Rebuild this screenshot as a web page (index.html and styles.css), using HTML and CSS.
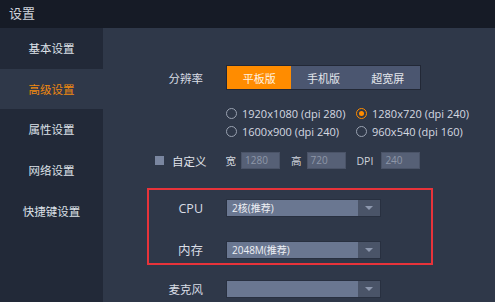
FILE: index.html
```html
<!DOCTYPE html>
<html lang="zh">
<head>
<meta charset="utf-8">
<link rel="stylesheet" href="styles.css">
</head>
<body>
<div class="app">
  <header class="titlebar">设置</header>
  <div class="body">
    <nav class="sidebar">
      <div class="nav-item">基本设置</div>
      <div class="nav-item active">高级设置</div>
      <div class="nav-item">属性设置</div>
      <div class="nav-item">网络设置</div>
      <div class="nav-item">快捷键设置</div>
    </nav>
    <main class="main">
      <div class="row res-row">
        <div class="label">分辨率</div>
        <div class="seg">
          <div class="seg-btn on">平板版</div>
          <div class="seg-btn">手机版</div>
          <div class="seg-btn">超宽屏</div>
        </div>
      </div>
      <div class="radios">
        <div class="radio"><span class="dot"></span>1920x1080 (dpi 280)</div>
        <div class="radio checked"><span class="dot"></span>1280x720 (dpi 240)</div>
        <div class="radio"><span class="dot"></span>1600x900 (dpi 240)</div>
        <div class="radio"><span class="dot"></span>960x540 (dpi 160)</div>
      </div>
      <div class="custom-row">
        <span class="check"></span>
        <span class="custom-label">自定义</span>
        <span class="in-label">宽</span><span class="input">1280</span>
        <span class="in-label">高</span><span class="input">720</span>
        <span class="in-label dpi">DPI</span><span class="input">240</span>
      </div>
      <div class="highlight">
        <div class="row">
          <div class="label inner">CPU</div>
          <div class="select"><span class="val">2核(推荐)</span><span class="arrow"></span></div>
        </div>
        <div class="row mem">
          <div class="label inner">内存</div>
          <div class="select"><span class="val">2048M(推荐)</span><span class="arrow"></span></div>
        </div>
      </div>
      <div class="row mic">
        <div class="label">麦克风</div>
        <div class="select"><span class="val"></span><span class="arrow"></span></div>
      </div>
    </main>
  </div>
</div>
</body>
</html>
```

FILE: styles.css
```css
* { box-sizing: border-box; }
html, body { margin: 0; padding: 0; }
body {
  width: 495px; height: 302px; overflow: hidden;
  font-family: "Noto Sans CJK SC", "Noto Sans", sans-serif;
  background: #2f3849;
  color: #d9dde5;
}
.app { display: flex; flex-direction: column; height: 302px; }
.titlebar {
  height: 28px; flex: none;
  background: #161b26;
  color: #d0d4dc;
  font-size: 13px;
  line-height: 26px;
  padding-left: 9px;
}
.body { display: flex; flex: 1; min-height: 0; }
.sidebar {
  width: 103px; flex: none;
  background: #222938;
  display: flex; flex-direction: column;
}
.nav-item {
  height: 40.6px;
  display: flex; align-items: center; justify-content: center;
  font-size: 11.5px;
  color: #dde1e8;
}
.nav-item.active { background: #2f3849; color: #f0890f; }
.main { flex: 1; display: flex; flex-direction: column; padding-top: 37px; }
.row { display: flex; align-items: center; }
.label {
  width: 100px; text-align: right; padding-right: 0;
  font-size: 11.5px; color: #d9dde5;
  margin-right: 23px;
}
.seg {
  display: flex;
  border: 1px solid #222836;
  height: 25px;
  width: 195px;
}
.seg-btn {
  width: 64.3px;
  display: flex; align-items: center; justify-content: center;
  background: #4b5670;
  font-size: 11px; color: #e3e6ec;
}
.seg-btn.on { background: #ff8c00; color: #fff3e3; }
.radios {
  display: grid;
  grid-template-columns: 130px 130px;
  grid-auto-rows: 18px;
  margin: 14px 0 0 123px;
}
.radio {
  display: flex; align-items: center;
  font-family: "Open Sans", "Noto Sans", sans-serif;
  font-size: 11px; color: #d5d9e1;
}
.dot {
  width: 11px; height: 11px; border-radius: 50%;
  border: 1.3px solid #9aa2b1;
  margin-right: 5px; flex: none;
  display: flex; align-items: center; justify-content: center;
}
.radio.checked .dot { border-color: #ff8c00; }
.radio.checked .dot::after {
  content: ""; width: 5px; height: 5px; border-radius: 50%; background: #ff8c00;
}
.custom-row {
  display: flex; align-items: center;
  height: 17px;
  margin: 12px 0 0 52px;
}
.check {
  width: 9px; height: 9px; background: #7a86a0; flex: none;
  margin-right: 8px;
}
.custom-label { font-size: 11.5px; color: #e0e3ea; margin-right: 19px; }
.in-label { font-size: 10.5px; color: #d0d4dc; margin-right: 5px; }
.in-label.dpi { font-family: "Open Sans", sans-serif; margin-right: 8px; }
.input {
  width: 39px; height: 17px;
  background: #566076;
  border: 1px solid #4a5367;
  font-family: "Open Sans", sans-serif;
  font-size: 10px; color: #8e97a8;
  padding-left: 3px; line-height: 15px;
  margin-right: 11px;
}
.highlight {
  margin: 19px 0 0 44px;
  width: 286px; height: 77px;
  border: 2px solid #e8333a;
  padding-top: 9px;
  display: flex; flex-direction: column;
}
.label.inner { width: 54px; font-family: "Open Sans", "Noto Sans CJK SC", sans-serif; font-size: 12.5px; }
.row.mem { margin-top: 23px; }
.select {
  width: 155px; height: 18px;
  display: flex;
  border: 1px solid #283040;
}
.select .val {
  flex: 1; background: #6a7791;
  font-size: 10px; color: #eef0f4;
  padding-left: 5px; line-height: 16px;
  font-family: "Open Sans", "Noto Sans CJK SC", sans-serif;
}
.select .arrow {
  width: 22px; background: #4a5468;
  display: flex; align-items: center; justify-content: center;
}
.select .arrow::after {
  content: ""; width: 0; height: 0;
  border-left: 4px solid transparent; border-right: 4px solid transparent;
  border-top: 4px solid #8d98ae;
}
.row.mic { margin-top: 15px; }
```
